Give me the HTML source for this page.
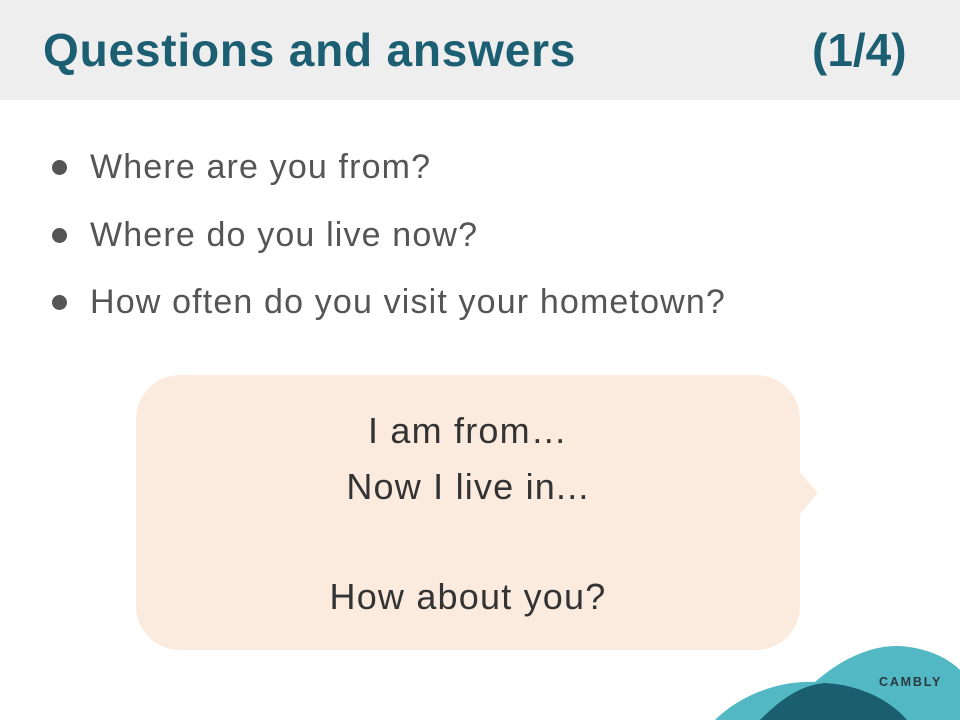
<!DOCTYPE html>
<html><head><style>
body{margin:0;width:960px;height:720px;overflow:hidden;background:#fff;position:relative;font-family:"Liberation Sans",sans-serif}
.hd{position:absolute;left:0;top:0;width:960px;height:100px;background:#eeeeee}
.t{position:absolute;top:22px;font-size:46px;font-weight:bold;color:#1c5e72;line-height:56px;letter-spacing:0.8px}
.b{position:absolute;left:90px;font-size:34px;color:#555;line-height:40px;letter-spacing:1.15px}
.dot{position:absolute;left:52px;width:15px;height:15px;border-radius:50%;background:#555}
.bub{position:absolute;left:136px;top:375px;width:664px;height:275px;background:#fbebdf;border-radius:44px}
.bt{position:absolute;left:136px;width:664px;text-align:center;font-size:36px;color:#333;line-height:40px;letter-spacing:1.2px}
</style></head><body>
<div class="hd"></div>
<div class="t" style="left:43px">Questions and answers</div>
<div class="t" style="left:812px;letter-spacing:0">(1/4)</div>
<div class="dot" style="top:160px"></div><div class="b" style="top:147px">Where are you from?</div>
<div class="dot" style="top:228px"></div><div class="b" style="top:215px">Where do you live now?</div>
<div class="dot" style="top:295px"></div><div class="b" style="top:282px">How often do you visit your hometown?</div>
<div class="bub"></div>
<svg style="position:absolute;left:0;top:0" width="960" height="720">
<path d="M798 470 L818 493 L798 516 Z" fill="#fbebdf"/>
<path d="M715 720 C740 695 780 680 815 682 C840 660 870 645 900 646 C930 648 950 660 960 670 L960 720 Z" fill="#52b9c4"/>
<path d="M760 720 C780 700 800 685 825 683 C860 685 890 700 907 720 Z" fill="#1a5e70"/>
<text x="879" y="686" font-family="Liberation Sans,sans-serif" font-weight="bold" font-size="12.5" letter-spacing="1.8" fill="#2a3a40">CAMBLY</text>
</svg>
<div class="bt" style="top:411px">I am from…</div>
<div class="bt" style="top:467px">Now I live in...</div>
<div class="bt" style="top:577px">How about you?</div>
</body></html>
